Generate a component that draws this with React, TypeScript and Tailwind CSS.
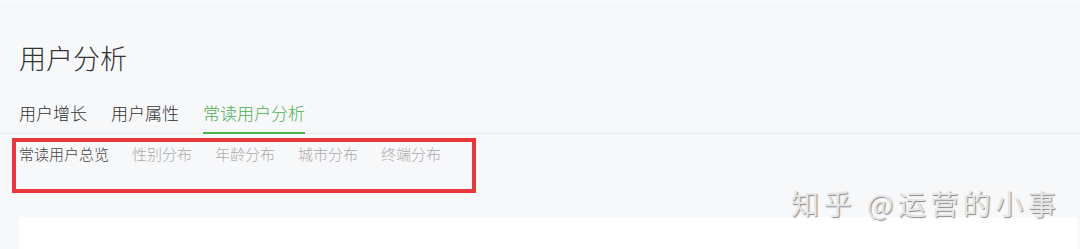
import React from "react";

const tabs = ["用户增长", "用户属性", "常读用户分析"];
const subTabs = ["常读用户总览", "性别分布", "年龄分布", "城市分布", "终端分布"];

const App: React.FC = () => {
    const activeTab = 2;
    const activeSub = 0;

    return (
        <div
            className="relative h-[249px] w-full overflow-hidden bg-[#f7f8fa] border-t border-[#fbfcfd] font-light"
            style={{ fontFamily: '"Noto Sans CJK SC", "Noto Sans", sans-serif' }}
        >
            <h1 className="pl-[19px] pt-[43px] text-[27px] leading-[28px] font-light text-[#333]">
                用户分析
            </h1>

            <div className="mt-[29px] flex gap-[24px] border-b border-[#e8e9eb] pl-[19px]">
                {tabs.map((tab, idx) => (
                    <div
                        key={tab}
                        className={`pb-[7px] text-[17px] leading-[24px] border-b-2 -mb-px ${idx === activeTab
                            ? "border-[#4caf50] text-[#4caf50]"
                            : "border-transparent text-[#333]"
                            }`}
                    >
                        {tab}
                    </div>
                ))}
            </div>

            <div className="mt-[9px] flex gap-[23px] pl-[19px]">
                {subTabs.map((tab, idx) => (
                    <div
                        key={tab}
                        className={`text-[15px] leading-[22px] ${idx === activeSub ? "text-[#444]" : "text-[#aaa]"
                            }`}
                    >
                        {tab}
                    </div>
                ))}
            </div>

            <div className="ml-[19px] mr-[2px] mt-[52px] h-[60px] bg-white" />

            {/* annotation box drawn over the sub tabs */}
            <div className="pointer-events-none absolute left-[12px] top-[137px] h-[55px] w-[464px] border-4 border-[#e8383d]" />

            {/* watermark */}
            <div
                className="pointer-events-none absolute left-[791px] top-[184px] whitespace-nowrap text-[28px] leading-[36px] tracking-[4.5px] text-[#e6e6e6] font-normal"
                style={{ textShadow: "1px 1px 1px rgba(0,0,0,0.45)" }}
            >
                知乎 @运营的小事
            </div>
        </div>
    );
};

export default App;
